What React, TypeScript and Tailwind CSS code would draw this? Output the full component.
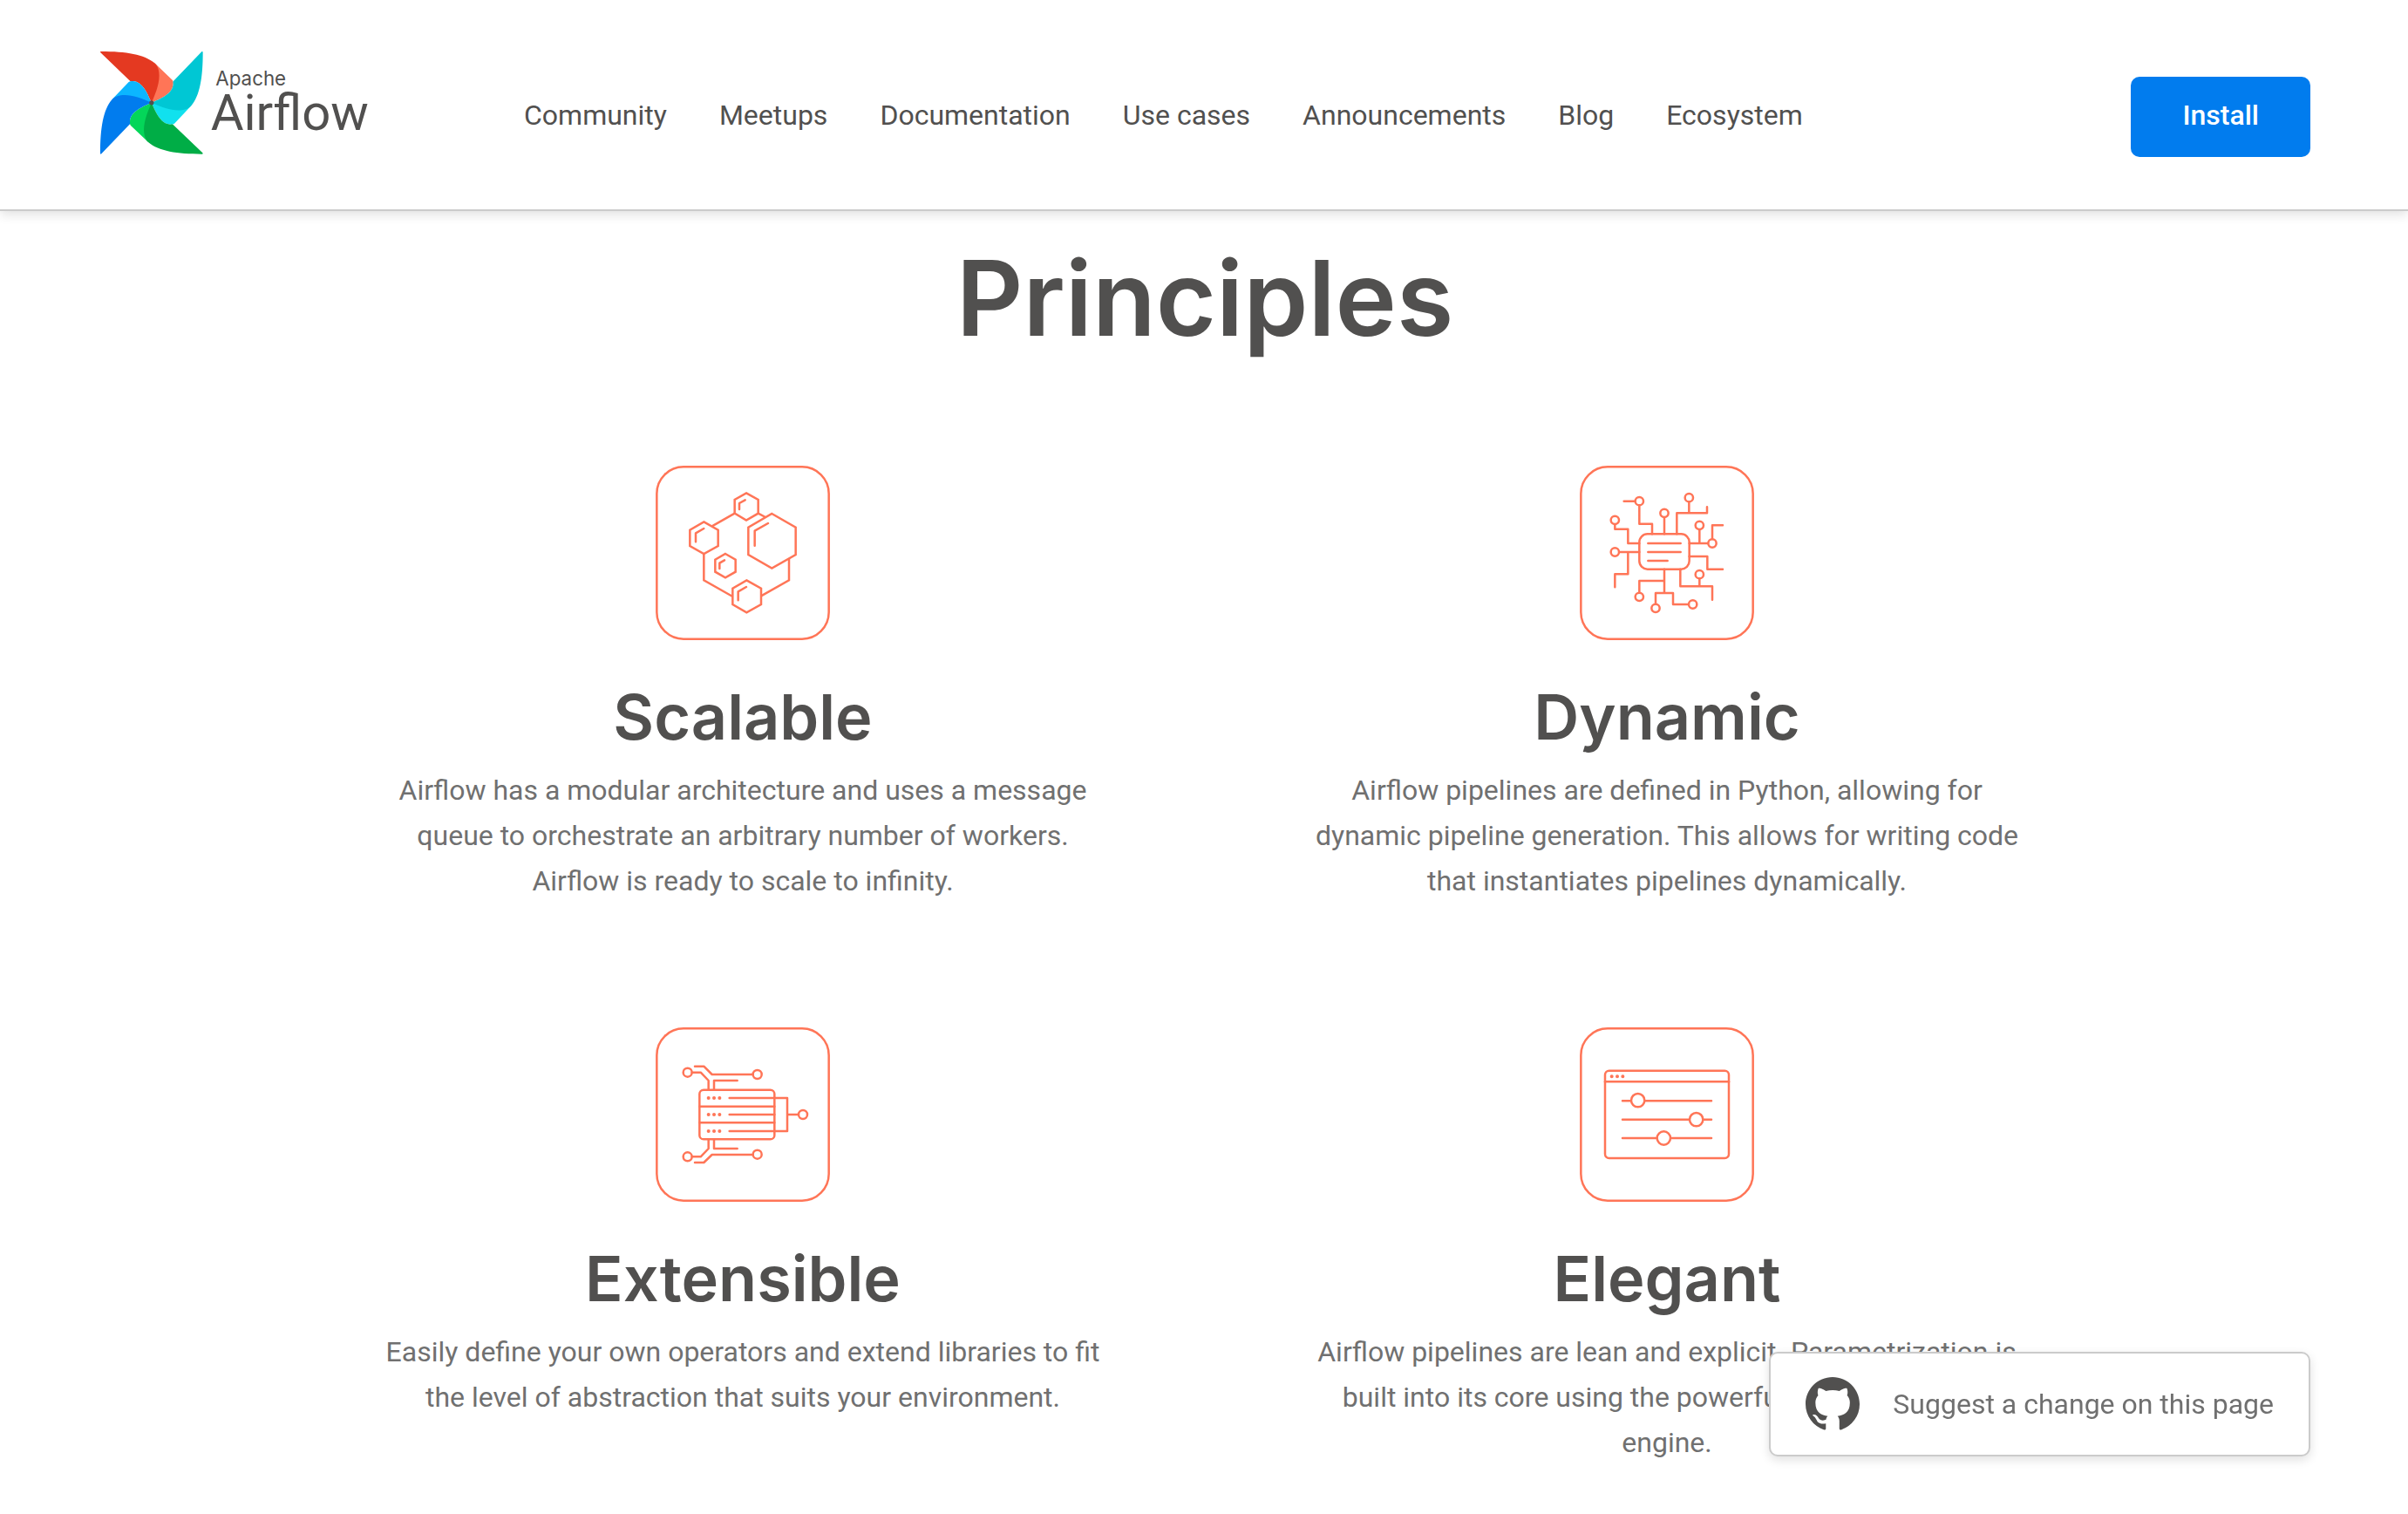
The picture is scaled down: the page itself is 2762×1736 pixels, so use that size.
import type { ReactNode } from "react";

const navItems = ["Community", "Meetups", "Documentation", "Use cases", "Announcements", "Blog", "Ecosystem"];

const blades = [
  { turn: "rotate(0 251.5 233.5)", main: "#e43921", fold: "#ff7557" },
  { turn: "rotate(90 251.5 233.5)", main: "#00c7d4", fold: "#11e1ee" },
  { turn: "rotate(180 251.5 233.5)", main: "#00ad46", fold: "#04d659" },
  { turn: "rotate(270 251.5 233.5)", main: "#017cee", fold: "#0cb6ff" },
];

function Logo() {
  return (
    <svg viewBox="72 54 960 360" className="h-[120px] w-80 shrink-0" role="img" aria-label="Apache Airflow">
      {blades.map((b) => (
        <g key={b.turn} transform={b.turn}>
          <path fill={b.fold} d="M262 97 L323 155 C326 159 327 163 326 169 C325 204 277 222 251.5 233.5 Z" />
          <path
            fill={b.main}
            d="M78 57 C164 57 227 67 262 97 C270 104 275 114 277 128 C281 162 268 195 251.5 233.5 C240 208 222 160 187 159 C183 159 180 160 178 159 L76 61 C74 59 75 57 78 57 Z"
          />
        </g>
      ))}
      <circle cx="251.5" cy="233.5" r="8" fill="#51504f" />
      <text x="472" y="173" fontSize="67" fill="#51504f" className="font-['Inter',sans-serif]">
        Apache
      </text>
      <text x="455" y="328" fontSize="174" fill="#51504f" className="font-['Roboto',sans-serif]">
        Airflow
      </text>
    </svg>
  );
}

function Tile({ children }: { children: ReactNode }) {
  return (
    <svg
      viewBox="36 42 600 600"
      className="size-[200px]"
      fill="none"
      stroke="#ff7557"
      strokeWidth="7.5"
      strokeLinecap="round"
      strokeLinejoin="round"
      aria-hidden="true"
    >
      <rect x="40" y="46" width="592" height="592" rx="92" />
      {children}
    </svg>
  );
}

function ScalableIcon() {
  return (
    <Tile>
      <g strokeLinejoin="miter" strokeLinecap="butt">
        <path d="M230 250 L308 206 M389 206 L414 219 M202 345 V436 L301 492 M399 490 L495 436 V361" />
        <path d="M348 136 L389 159 V206 L348 230 L308 206 V159 Z" />
        <path d="M436 207 L518 254 V348 L436 395 L355 348 V254 Z" />
        <path d="M202 235 L251 263 V318 L202 345 L154 318 V263 Z" />
        <path d="M276 345 L311 365 V407 L276 427 L241 407 V365 Z" />
        <path d="M349 436 L399 464 V519 L349 547 L301 519 V464 Z" />
      </g>
      <path d="M324 192 V171 L344 160 M377 317 V266 L423 240 M174 304 V274 L202 258 M256 396 V377 L273 367 M320 505 V475 L348 459" />
    </Tile>
  );
}

function DynamicIcon() {
  return (
    <Tile>
      <rect x="241" y="277" width="172" height="121" rx="28" />
      <path d="M271 309 H383 M271 339 H383 M271 369 H338" />
      <path d="M188 164 H226 M241 179 V242 H285 V277 M327 220 V277 M370 277 V205 H474 V184 M412 167 V205" />
      <path d="M157 244 V260 H202 V309 H241 M172 339 H241 M202 339 V415 H157 V460" />
      <path d="M413 309 H477 M448 262 V309 M492 294 V247 H528 M413 354 H475 V398 H528" />
      <path d="M382 398 V457 H492 V503 M448 431 V457 M327 398 V480 M327 438 H241 V478 M297 517 V480 H357 V519 H410" />
      <circle cx="241" cy="164" r="14" />
      <circle cx="157" cy="229" r="14" />
      <circle cx="157" cy="339" r="14" />
      <circle cx="327" cy="205" r="14" />
      <circle cx="412" cy="152" r="14" />
      <circle cx="448" cy="247" r="14" />
      <circle cx="492" cy="309" r="14" />
      <circle cx="448" cy="416" r="14" />
      <circle cx="241" cy="493" r="14" />
      <circle cx="297" cy="532" r="14" />
      <circle cx="425" cy="519" r="14" />
    </Tile>
  );
}

function ExtensibleIcon() {
  return (
    <Tile>
      <rect x="187" y="257" width="258" height="170" rx="14" />
      <path d="M187 314 H445 M187 370 H445" />
      <path d="M290 285 H489 V399 H290 M290 342 H445 M489 342 H527" />
      <path d="M161 197 H191 L218 225 V257 M171 176 H202 L230 204 H371 M317 225 H237 V257" />
      <path d="M161 487 H191 L218 459 V427 M171 507 H202 L230 480 H371 M317 459 H237 V427" />
      <circle cx="146" cy="197" r="15" />
      <circle cx="386" cy="204" r="15" />
      <circle cx="543" cy="342" r="15" />
      <circle cx="146" cy="487" r="15" />
      <circle cx="386" cy="479" r="15" />
      <path strokeWidth="12" d="M218 285 h.1 M237 285 h.1 M256 285 h.1 M218 342 h.1 M237 342 h.1 M256 342 h.1 M218 399 h.1 M237 399 h.1 M256 399 h.1" />
    </Tile>
  );
}

function ElegantIcon() {
  return (
    <Tile>
      <rect x="123" y="191" width="426" height="301" rx="14" />
      <path d="M123 229 H549" />
      <path d="M183 295 H212 M261 295 H489 M183 359 H413 M462 359 H489 M183 423 H301 M350 423 H489" />
      <circle cx="236" cy="293" r="23" />
      <circle cx="437" cy="359" r="23" />
      <circle cx="325" cy="423" r="23" />
      <path strokeWidth="12" d="M146 211 h.1 M165 211 h.1 M184 211 h.1" />
    </Tile>
  );
}

const principles = [
  {
    title: "Scalable",
    icon: <ScalableIcon />,
    text: "Airflow has a modular architecture and uses a message queue to orchestrate an arbitrary number of workers. Airflow is ready to scale to infinity.",
  },
  {
    title: "Dynamic",
    icon: <DynamicIcon />,
    text: "Airflow pipelines are defined in Python, allowing for dynamic pipeline generation. This allows for writing code that instantiates pipelines dynamically.",
  },
  {
    title: "Extensible",
    icon: <ExtensibleIcon />,
    text: "Easily define your own operators and extend libraries to fit the level of abstraction that suits your environment.",
  },
  {
    title: "Elegant",
    icon: <ElegantIcon />,
    text: "Airflow pipelines are lean and explicit. Parametrization is built into its core using the powerful Jinja templating engine.",
  },
];

export default function App() {
  return (
    <div className="bg-white font-['Roboto',sans-serif] text-[32px] leading-[52px] text-[#707070]">
      <header className="flex items-start border-b-2 border-[#cbcbcb] bg-white pt-[58px] pr-28 pb-[60px] pl-[114px] shadow-[0_4px_12px_rgba(0,0,0,0.12)]">
        <a href="#" className="shrink-0">
          <Logo />
        </a>
        <nav className="mt-12 ml-[167px] flex gap-[60px] text-[#51504f]">
          {navItems.map((item) => (
            <a key={item} href="#" className="whitespace-nowrap">
              {item}
            </a>
          ))}
        </nav>
        <button type="button" className="mt-[30px] ml-auto rounded-[10px] bg-[#017cee] px-[59px] pt-[18px] pb-[22px] font-medium text-white">
          Install
        </button>
      </header>

      <main className="pt-7 pr-28 pl-[114px]">
        <h1 className="text-center font-['Inter',sans-serif] text-[119px] leading-[144px] font-semibold text-[#51504f]">
          Principles
        </h1>
        <div className="mx-auto mt-[120px] grid max-w-[1892px] grid-cols-2 gap-x-[228px] gap-y-[142px]">
          {principles.map((p) => (
            <article key={p.title} className="flex flex-col items-center text-center">
              {p.icon}
              <h2 className="mt-[46px] font-['Inter',sans-serif] text-[72px] leading-[84px] font-semibold text-[#51504f]">
                {p.title}
              </h2>
              <p className="mt-4">{p.text}</p>
            </article>
          ))}
        </div>
      </main>

      <a
        href="#"
        className="fixed right-28 bottom-[66px] flex items-center gap-[38px] rounded-[10px] border-2 border-[#cbcbcb] bg-white px-10 py-8 shadow-[0_4px_12px_rgba(0,0,0,0.12)]"
      >
        <svg viewBox="0 0 16 16" className="size-[62px] -my-2" fill="#51504f" aria-hidden="true">
          <path d="M8 0C3.58 0 0 3.58 0 8c0 3.54 2.29 6.53 5.47 7.59.4.07.55-.17.55-.38 0-.19-.01-.82-.01-1.49-2.01.37-2.53-.49-2.69-.94-.09-.23-.48-.94-.82-1.13-.28-.15-.68-.52-.01-.53.63-.01 1.08.58 1.23.82.72 1.21 1.87.87 2.33.66.07-.52.28-.87.51-1.07-1.78-.2-3.64-.89-3.64-3.95 0-.87.31-1.59.82-2.15-.08-.2-.36-1.02.08-2.12 0 0 .67-.21 2.2.82.64-.18 1.32-.27 2-.27s1.36.09 2 .27c1.53-1.04 2.2-.82 2.2-.82.44 1.1.16 1.92.08 2.12.51.56.82 1.27.82 2.15 0 3.07-1.87 3.75-3.65 3.95.29.25.54.73.54 1.48 0 1.07-.01 1.93-.01 2.2 0 .21.15.46.55.38A8.01 8.01 0 0 0 16 8c0-4.42-3.58-8-8-8z" />
        </svg>
        <span className="whitespace-nowrap">Suggest a change on this page</span>
      </a>
    </div>
  );
}
